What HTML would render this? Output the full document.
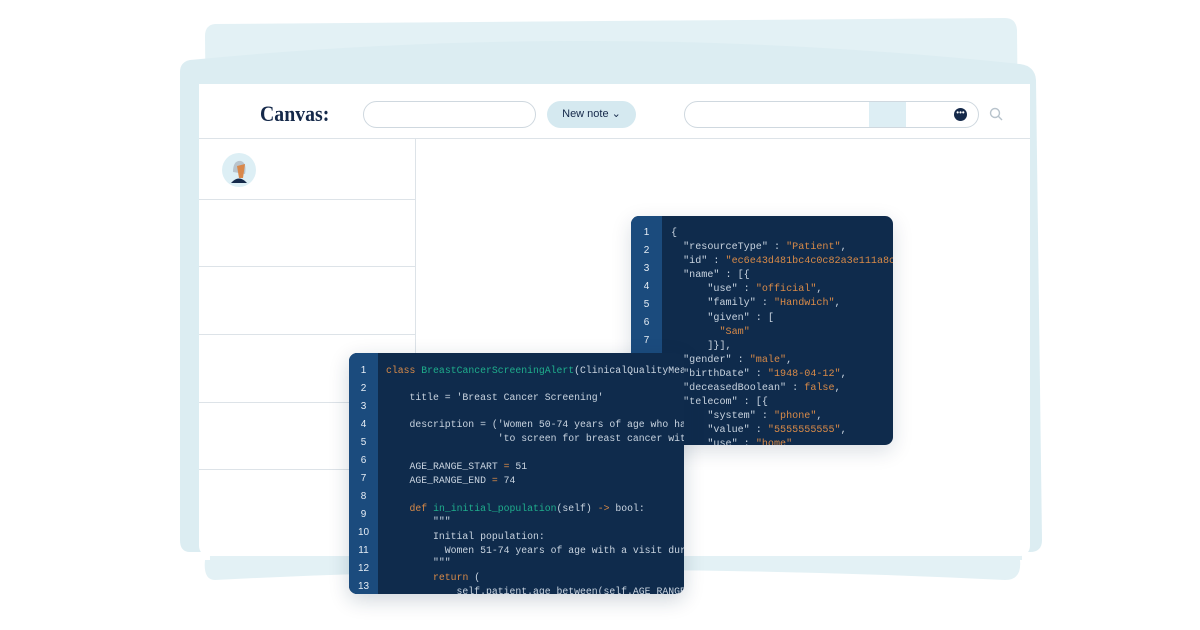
<!DOCTYPE html>
<html><head><meta charset="utf-8"><style>
*{margin:0;padding:0;box-sizing:border-box}
body{width:1200px;height:630px;background:#fff;position:relative;overflow:hidden;font-family:"Liberation Sans",sans-serif}
.abs{position:absolute}
.code{font-family:"Liberation Mono","DejaVu Sans Mono",monospace;font-size:9.8px;color:#c9d4e0;white-space:pre}
.o{color:#d88a48}.g{color:#1fae8c}
.num{font-family:"Liberation Sans",sans-serif;font-size:10px;color:#e6edf5;width:100%;text-align:center}
</style></head><body>
<svg class="abs" style="left:0;top:0" width="1200" height="630">
<path d="M215 24 L1005 18 Q1016 18 1017 30 L1022 560 L210 560 L205 36 Q205 25 215 24Z" fill="#e3f1f5"/>
<path d="M190 60 Q600 20 1020 64 Q1035 66 1036 80 L1042 540 Q1042 552 1030 552 L190 552 Q180 552 180 540 L180 72 Q180 62 190 60Z" fill="#dcedf2"/>
<path d="M205 560 L1020 560 Q1022 580 1005 580 Q600 560 215 580 Q203 580 205 560Z" fill="#e3f1f5"/>
</svg>
<div class="abs" style="left:199px;top:84px;width:831px;height:472px;background:#fff;border-radius:0 0 10px 10px"></div>
<div class="abs" style="left:199px;top:138px;width:831px;height:1px;background:#dde3e8"></div>
<div class="abs" style="left:415px;top:139px;width:1px;height:417px;background:#dde3e8"></div>
<div class="abs" style="left:199px;top:199px;width:216px;height:1px;background:#dde3e8"></div>
<div class="abs" style="left:199px;top:266px;width:216px;height:1px;background:#dde3e8"></div>
<div class="abs" style="left:199px;top:334px;width:216px;height:1px;background:#dde3e8"></div>
<div class="abs" style="left:199px;top:402px;width:216px;height:1px;background:#dde3e8"></div>
<div class="abs" style="left:199px;top:469px;width:216px;height:1px;background:#dde3e8"></div>
<div class="abs" style="left:260px;top:101px;font-family:'Liberation Serif',serif;font-weight:bold;font-size:22px;color:#15294a;transform:scaleX(.9);transform-origin:left">Canvas:</div>
<div class="abs" style="left:363px;top:101px;width:173px;height:27px;border:1px solid #cfd8df;border-radius:14px"></div>
<div class="abs" style="left:547px;top:101px;width:89px;height:27px;background:#d5e9f0;border-radius:14px;font-size:11px;color:#15294a;text-align:center;line-height:27px">New note ⌄</div>
<div class="abs" style="left:684px;top:101px;width:295px;height:27px;border:1px solid #cfd8df;border-radius:14px;overflow:hidden"><div class="abs" style="left:184px;top:0;width:37px;height:27px;background:#ddeef4"></div></div>
<div class="abs" style="left:954px;top:108px;width:13px;height:13px;border-radius:50%;background:#15294a;color:#fff;font-size:8px;line-height:9px;text-align:center">•••</div>
<svg class="abs" style="left:989px;top:107px" width="14" height="14"><circle cx="6" cy="6" r="4.5" fill="none" stroke="#b8c3cc" stroke-width="1.4"/><path d="M9.3 9.3 L13 13" stroke="#b8c3cc" stroke-width="1.4"/></svg>
<svg class="abs" style="left:221px;top:152px" width="36" height="36"><circle cx="18" cy="18" r="17" fill="#ddeff5"/><path d="M12 20 Q12 8 20 9 Q26 11 24 22Z" fill="#b9c4cc"/><path d="M16 14 L24 12 L22 26 L18 26Z" fill="#d9884a"/><path d="M10 31 Q18 22 26 31Z" fill="#15294a"/></svg>
<!-- JSON panel -->
<div class="abs" style="left:631px;top:216px;width:262px;height:229px;background:#0f2b4c;border-radius:8px;overflow:hidden;box-shadow:0 6px 20px rgba(15,43,76,.15)">
<div class="abs" style="left:0;top:0;width:31px;height:229px;background:#1b4b7d"></div>
<div class="abs" style="left:0;top:11px;width:31px">
<div class="num" style="position:absolute;top:0">1</div><div class="num" style="position:absolute;top:18px">2</div><div class="num" style="position:absolute;top:36px">3</div><div class="num" style="position:absolute;top:54px">4</div><div class="num" style="position:absolute;top:72px">5</div><div class="num" style="position:absolute;top:90px">6</div><div class="num" style="position:absolute;top:108px">7</div></div>
<div class="abs code" style="left:40px;top:11px;line-height:14.1px;font-size:10.1px">{
  "resourceType" : <span class="o">"Patient"</span>,
  "id" : <span class="o">"ec6e43d481bc4c0c82a3e111a8c7</span>
  "name" : [{
      "use" : <span class="o">"official"</span>,
      "family" : <span class="o">"Handwich"</span>,
      "given" : [
        <span class="o">"Sam"</span>
      ]}],
  "gender" : <span class="o">"male"</span>,
  "birthDate" : <span class="o">"1948-04-12"</span>,
  "deceasedBoolean" : <span class="o">false</span>,
  "telecom" : [{
      "system" : <span class="o">"phone"</span>,
      "value" : <span class="o">"5555555555"</span>,
      "use" : <span class="o">"home"</span></div>
</div>
<!-- Python panel -->
<div class="abs" style="left:349px;top:353px;width:335px;height:241px;background:#0f2b4c;border-radius:8px;overflow:hidden;box-shadow:0 6px 20px rgba(15,43,76,.2)">
<div class="abs" style="left:0;top:0;width:29px;height:241px;background:#1b4b7d"></div>
<div class="abs" style="left:0;top:12px;width:29px">
<div class="num" style="position:absolute;top:0">1</div><div class="num" style="position:absolute;top:18px">2</div><div class="num" style="position:absolute;top:36px">3</div><div class="num" style="position:absolute;top:54px">4</div><div class="num" style="position:absolute;top:72px">5</div><div class="num" style="position:absolute;top:90px">6</div><div class="num" style="position:absolute;top:108px">7</div><div class="num" style="position:absolute;top:126px">8</div><div class="num" style="position:absolute;top:144px">9</div><div class="num" style="position:absolute;top:162px">10</div><div class="num" style="position:absolute;top:180px">11</div><div class="num" style="position:absolute;top:198px">12</div><div class="num" style="position:absolute;top:216px">13</div></div>
<div class="abs code" style="left:37px;top:12px"><span class="o">class</span> <span class="g">BreastCancerScreeningAlert</span>(ClinicalQualityMeasure</div>
<div class="abs code" style="left:37px;top:39px">    title = 'Breast Cancer Screening'</div>
<div class="abs code" style="left:37px;top:66px">    description = ('Women 50-74 years of age who have</div>
<div class="abs code" style="left:37px;top:80px">                   'to screen for breast cancer within</div>
<div class="abs code" style="left:37px;top:108px">    AGE_RANGE_START <span class="o">=</span> 51</div>
<div class="abs code" style="left:37px;top:122px">    AGE_RANGE_END <span class="o">=</span> 74</div>
<div class="abs code" style="left:37px;top:150px">    <span class="o">def</span> <span class="g">in_initial_population</span>(self) <span class="o">-&gt;</span> bool:</div>
<div class="abs code" style="left:37px;top:163px">        """</div>
<div class="abs code" style="left:37px;top:178px">        Initial population:</div>
<div class="abs code" style="left:37px;top:192px">          Women 51-74 years of age with a visit during</div>
<div class="abs code" style="left:37px;top:204px">        """</div>
<div class="abs code" style="left:37px;top:219px">        <span class="o">return</span> (</div>
<div class="abs code" style="left:37px;top:233px">            self.patient.age_between(self.AGE_RANGE</div>
</div>
</body></html>
